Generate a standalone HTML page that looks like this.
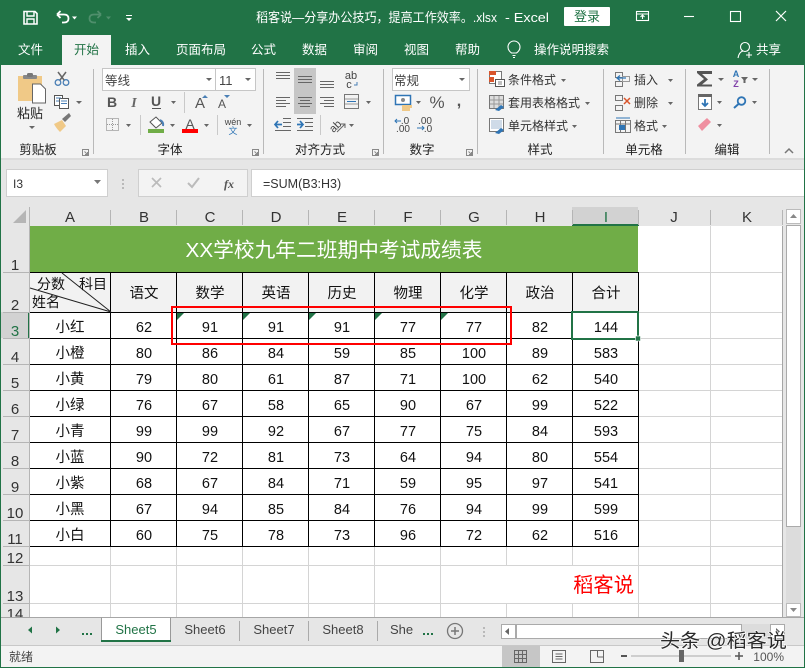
<!DOCTYPE html>
<html lang="zh"><head><meta charset="utf-8"><style>
html,body{margin:0;padding:0;width:805px;height:668px;overflow:hidden;background:#fff}
svg{display:block}
text{font-family:"Liberation Sans","WenQuanYi Zen Hei","Noto Sans CJK SC",sans-serif;fill:#222}
.c{text-anchor:middle}
.cell{font-size:14.5px;text-anchor:middle;fill:#111}
.hd{font-size:15px;text-anchor:middle;fill:#333}
.rb{font-size:12px;fill:#333}
.t{font-size:12.5px;fill:#fff}
</style></head><body>
<svg width="805" height="668" viewBox="0 0 805 668" xmlns="http://www.w3.org/2000/svg">
<rect width="805" height="668" fill="#fff"/>
<!-- title -->
<rect width="805" height="65" fill="#217346"/>
<g fill="none" stroke="#fff" stroke-width="1.6">
<path d="M24 11.500h11l2 2v10.500h-13z"/><path d="M27 12v4h7v-4M27 24v-5h7v5" stroke-width="1.400"/>
<path d="M57 14.500h7q4.500 0 4.500 4t-4.500 4h-2M57 14.500l3.500-3.500M57 14.500l3.500 3.500" stroke-width="1.800"/>
</g>
<path d="M72 16.500h5l-2.500 3z" fill="#fff"/>
<path d="M101 14.500h-7q-4.500 0-4.500 4t4.500 4h2M101 14.500l-3.500-3.500M101 14.500l-3.500 3.500" fill="none" stroke="#4f8f6c" stroke-width="1.800"/>
<path d="M106 16.500h5l-2.500 3z" fill="#4f8f6c"/>
<path d="M126 15h6v1h-6zM126 18h6l-3 3z" fill="#fff"/>
<text x="256" y="22" font-size="13" style="fill:#fff" textLength="241" lengthAdjust="spacingAndGlyphs">稻客说—分享办公技巧，提高工作效率。.xlsx</text>
<text x="505" y="22" font-size="13" style="fill:#fff" textLength="44" lengthAdjust="spacingAndGlyphs">-  Excel</text>
<rect x="564" y="7" width="46" height="19" rx="1" fill="#fff"/>
<text x="587" y="21" class="c" font-size="13" style="fill:#217346">登录</text>
<g fill="none" stroke="#fff" stroke-width="1.100">
<rect x="636.500" y="11.500" width="12" height="9"/><path d="M636.500 14h12M642.500 19v-4M640.500 17l2-2 2 2"/>
<path d="M684 16.500h10"/><rect x="730.500" y="11.500" width="10" height="10"/>
<path d="M776 11l10 10M786 11l-10 10" stroke-width="1.200"/>
</g>
<!-- tabs -->
<rect x="62" y="35" width="49" height="31" fill="#f3f3f3"/>
<text x="18" y="54" class="t">文件</text>
<text x="74" y="54" class="t" style="fill:#217346">开始</text>
<text x="125" y="54" class="t">插入</text>
<text x="176" y="54" class="t">页面布局</text>
<text x="251" y="54" class="t">公式</text>
<text x="302" y="54" class="t">数据</text>
<text x="353" y="54" class="t">审阅</text>
<text x="404" y="54" class="t">视图</text>
<text x="455" y="54" class="t">帮助</text>
<text x="534" y="54" class="t">操作说明搜索</text>
<text x="756" y="54" class="t">共享</text>
<g fill="none" stroke="#fff" stroke-width="1.100">
<path d="M511.500 53q-3.500-2.500-3.500-6a6 6 0 0 1 12 0q0 3.500-3.500 6zM512.500 55.500h3M513 57.500h2"/>
<circle cx="745" cy="47" r="4.500"/><path d="M738 58q1-6 5-7M746 55h6M749 52v6"/>
</g>
<!-- ribbon -->
<rect x="1" y="65" width="804" height="93" fill="#f3f3f3"/>
<rect x="1" y="158" width="804" height="2" fill="#dcdcdc"/>
<rect x="1" y="160" width="804" height="47" fill="#e6e6e6"/>
<g fill="#b9b9b9">
<rect x="93" y="69" width="1" height="85"/><rect x="263" y="69" width="1" height="85"/><rect x="383" y="69" width="1" height="85"/><rect x="477" y="69" width="1" height="85"/><rect x="603" y="69" width="1" height="85"/><rect x="685" y="69" width="1" height="85"/><rect x="769" y="69" width="1" height="85"/>
</g>
<!-- clipboard -->
<path d="M18 76h24v25H18z" fill="#f0c987"/>
<rect x="23" y="75" width="14" height="4" rx="1" fill="#888"/><rect x="27" y="73" width="6" height="4" rx="1.500" fill="#777"/>
<path d="M32.500 84h8l5 5v14h-13z" fill="#fff" stroke="#666"/>
<text x="30" y="118" class="c" font-size="13" style="fill:#222">粘贴</text>
<path d="M29 126h6l-3 3z" fill="#666"/>
<g fill="none" stroke="#4a7fb5" stroke-width="1.300"><circle cx="58" cy="82.500" r="2.800"/><circle cx="66" cy="82.500" r="2.800"/></g>
<path d="M58 72l6 8M66 72l-6 8" stroke="#666" stroke-width="1.500"/>
<g fill="#fff" stroke="#555"><rect x="54.500" y="95.500" width="8" height="10"/><rect x="59.500" y="98.500" width="9" height="10"/></g>
<path d="M56 98h5M56 101h3M61 101h6M61 103.500h6" stroke="#4a7fb5"/>
<path d="M76 101h6l-3 3z" fill="#666"/>
<path d="M54 124l8-4 4 6-6 6q-4-4-6-8z" fill="#f0c987"/><path d="M62 119l7-6 2 3-6 6z" fill="#777"/>
<text x="38" y="154" class="c" font-size="12.500">剪贴板</text>
<g fill="none" stroke="#888"><path d="M82.500 149.500h6v6h-6zM84.500 151.500l3 3M87.500 152v2.500h-2.500"/><path d="M252.500 149.500h6v6h-6zM254.500 151.500l3 3M257.500 152v2.500h-2.500"/><path d="M372.500 149.500h6v6h-6zM374.500 151.500l3 3M377.500 152v2.500h-2.500"/><path d="M466.500 149.500h6v6h-6zM468.500 151.500l3 3M471.500 152v2.500h-2.500"/></g>
<!-- font -->
<rect x="102.500" y="68.500" width="153" height="22" fill="#fff" stroke="#c6c6c6"/><rect x="215" y="68" width="1" height="23" fill="#c6c6c6"/>
<text x="105" y="85" font-size="12.500" style="fill:#444">等线</text>
<text x="219" y="85" font-size="13" style="fill:#444">11</text>
<path d="M206 78h6l-3 3zM245 78h6l-3 3z" fill="#666"/>
<text x="112" y="107" class="c" font-size="14" font-weight="700" style="fill:#555">B</text>
<text x="134" y="107" class="c" font-size="14" font-style="italic" style="fill:#666;font-family:'Liberation Serif'" font-weight="700">I</text>
<text x="156" y="106" class="c" font-size="14" font-weight="700" style="fill:#555">U</text>
<path d="M152 108.500h9" stroke="#555"/>
<path d="M171 101h5l-2.500 3z" fill="#666"/><rect x="184" y="92" width="1" height="21" fill="#c9c9c9"/>
<text x="200" y="108" class="c" font-size="15" style="fill:#555">A</text><text x="222" y="108" class="c" font-size="12" style="fill:#555">A</text>
<path d="M202 98l3-3 3 3zM224 95l3 3 3-3z" fill="#4a7fb5"/>
<rect x="106.500" y="118.500" width="12" height="12" fill="none" stroke="#777" stroke-dasharray="1 1"/><path d="M112.500 119v11M107 124.500h11" stroke="#999" stroke-dasharray="1 1"/>
<path d="M126 124h5l-2.500 3z" fill="#666"/><rect x="140" y="115" width="1" height="20" fill="#c9c9c9"/>
<path d="M150 122l6-5 6 6-6 5z" fill="#fff" stroke="#555"/><path d="M160 120q4 2 3 6" stroke="#4a7fb5" stroke-width="2" fill="none"/>
<rect x="148" y="129" width="16" height="4" fill="#70ad47"/>
<path d="M170 124h5l-2.500 3z" fill="#666"/>
<text x="190" y="129" class="c" font-size="14" style="fill:#555">A</text><rect x="182" y="129" width="16" height="4" fill="#f00"/>
<path d="M204 124h5l-2.500 3z" fill="#666"/><rect x="217" y="115" width="1" height="20" fill="#c9c9c9"/>
<text x="233" y="125" class="c" font-size="9" style="fill:#444">wén</text><text x="233" y="134" class="c" font-size="9" style="fill:#2f75b5">文</text>
<path d="M247 124h5l-2.500 3z" fill="#666"/>
<text x="170" y="154" class="c" font-size="12.500">字体</text>
<!-- align -->
<rect x="294" y="68" width="22" height="46" fill="#c6c6c6"/>
<g stroke="#666">
<path d="M276 72.500h14M276 75.500h14M276 78.500h14M298 76.500h14M298 79.500h14M298 82.500h14M320 81.500h14M320 84.500h14M320 87.500h14"/>
<path d="M276 97.500h14M276 100.500h10M276 103.500h14M276 106.500h10M298 97.500h14M300 100.500h10M298 103.500h14M300 106.500h10M320 97.500h14M324 100.500h10M320 103.500h14M324 106.500h10"/>
<path d="M283 118.500h8M283 122.500h8M283 126.500h8M275 130.500h16M297 118.500h16M305 122.500h8M305 126.500h8M297 130.500h16"/>
</g>
<path d="M275 124.500h7M278 121l-3 3.500 3 3.500" stroke="#2f75b5" stroke-width="1.700" fill="none"/>
<path d="M297 124.500h6M300 121l3 3.500-3 3.500" stroke="#2f75b5" stroke-width="1.700" fill="none"/>
<text x="351" y="79" class="c" font-size="11" style="fill:#444">ab</text><text x="349" y="88" class="c" font-size="11" style="fill:#444">c</text><path d="M357 82v3h-3" stroke="#4a7fb5" fill="none"/>
<rect x="344.500" y="94.500" width="14" height="14" fill="none" stroke="#777"/><path d="M345 99h13M345 104h13" stroke="#999"/><path d="M347 101.500h9" stroke="#2f75b5"/>
<path d="M366 101h5l-2.500 3z" fill="#666"/>
<rect x="320" y="115" width="1" height="20" fill="#c9c9c9"/>
<text x="335" y="130" class="c" font-size="11" style="fill:#444" transform="rotate(-45 335 126)">ab</text><path d="M337 132l8-8M341 124h4v4" stroke="#666" fill="none"/>
<path d="M349 124h5l-2.500 3z" fill="#666"/>
<text x="320" y="154" class="c" font-size="12.500">对齐方式</text>
<!-- number -->
<rect x="392.500" y="68.500" width="77" height="22" fill="#fff" stroke="#c6c6c6"/>
<text x="394" y="85" font-size="12.500" style="fill:#444">常规</text><path d="M459 78h6l-3 3z" fill="#666"/>
<rect x="395.500" y="95.500" width="15" height="9" fill="#fff" stroke="#2f75b5" stroke-width="1.500"/><circle cx="403" cy="100" r="2" fill="#888"/>
<path d="M402 105h10v3h-10zM402 108h8v3h-8z" fill="#f0c987"/>
<path d="M416 101h5l-2.500 3z" fill="#666"/>
<text x="437" y="108" class="c" font-size="17" style="fill:#555">%</text><text x="459" y="106" class="c" font-size="16" font-weight="700" style="fill:#555">,</text>
<text x="405" y="124" class="c" font-size="10" style="fill:#444">.0</text><text x="403" y="132" class="c" font-size="10" style="fill:#444">.00</text><path d="M395 121h6M397 119l-2 2 2 2" stroke="#2f75b5" fill="none"/>
<text x="425" y="124" class="c" font-size="10" style="fill:#444">.00</text><text x="428" y="132" class="c" font-size="10" style="fill:#444">.0</text><path d="M417 128h7M422 126l2 2-2 2" stroke="#2f75b5" fill="none"/>
<text x="422" y="154" class="c" font-size="12.500">数字</text>
<!-- styles -->
<rect x="489.500" y="71.500" width="12" height="12" fill="#fff" stroke="#777"/><path d="M489 71h7v4h-7zM489 77h5v5h-5z" fill="#d9552c"/><rect x="495.500" y="79.500" width="9" height="7" fill="#fff" stroke="#555"/><path d="M498 82h4M498 84h4" stroke="#555" stroke-width=".7"/>
<text x="508" y="84" class="rb">条件格式</text><path d="M561 79h5l-2.500 3z" fill="#666"/>
<rect x="489.500" y="95.500" width="14" height="13" fill="#ddd" stroke="#777"/><path d="M494 96v12M499 96v12M490 100h13M490 104h13" stroke="#999"/><path d="M495 110l6-5 3 2-5 4z" fill="#2f75b5"/>
<text x="508" y="107" class="rb">套用表格格式</text><path d="M585 102h5l-2.500 3z" fill="#666"/>
<rect x="489.500" y="118.500" width="14" height="13" fill="#fff" stroke="#777"/><rect x="491" y="120" width="11" height="9" fill="#cfdbe8"/><path d="M495 133l6-5 3 2-5 4z" fill="#2f75b5"/>
<text x="508" y="130" class="rb">单元格样式</text><path d="M572 125h5l-2.500 3z" fill="#666"/>
<text x="540" y="154" class="c" font-size="12.500">样式</text>
<!-- cells -->
<g fill="none" stroke="#777"><rect x="615.500" y="72.500" width="7" height="5"/><rect x="615.500" y="81.500" width="7" height="5"/><rect x="622.500" y="76.500" width="7" height="5" stroke="#999"/>
<rect x="615.500" y="95.500" width="7" height="5"/><rect x="615.500" y="105.500" width="7" height="5"/>
<rect x="615.500" y="120.500" width="15" height="12"/><path d="M616 124h14M620.500 121v11M625.500 121v11"/></g>
<path d="M617 78h9M620 75.500l-3 2.500 3 2.500" stroke="#2f75b5" fill="none" stroke-width="1.300"/>
<path d="M624 98l6 6M630 98l-6 6" stroke="#d9552c" stroke-width="1.500"/>
<rect x="619" y="125" width="6" height="5" fill="#2f75b5"/><path d="M616 118h14" stroke="#2f75b5"/>
<text x="634" y="84" class="rb">插入</text><path d="M668 79h5l-2.500 3z" fill="#666"/>
<text x="634" y="107" class="rb">删除</text><path d="M668 102h5l-2.500 3z" fill="#666"/>
<text x="634" y="130" class="rb">格式</text><path d="M662 125h5l-2.500 3z" fill="#666"/>
<text x="644" y="154" class="c" font-size="12.500">单元格</text>
<!-- edit -->
<path d="M697 71h15v3h-10l6 5.500-6 5h10v2h-15v-2l7-5.500-7-6z" fill="#555"/>
<path d="M718 78h6l-3 3z" fill="#666"/>
<text x="736" y="77" class="c" font-size="9" font-weight="700" style="fill:#2f75b5">A</text><text x="736" y="87" class="c" font-size="9" font-weight="700" style="fill:#7f3fa8">Z</text>
<path d="M741 77h7l-2.500 3v3h-2v-3z" fill="#666"/><path d="M752 78h6l-3 3z" fill="#666"/>
<rect x="698.500" y="94.500" width="13" height="15" fill="#fff" stroke="#777"/><rect x="698" y="94" width="14" height="3" fill="#666"/>
<path d="M705 99v7M702 103l3 3 3-3" stroke="#2f75b5" stroke-width="1.800" fill="none"/><path d="M717 101h5l-2.500 3z" fill="#666"/>
<circle cx="741.500" cy="101" r="3.800" fill="none" stroke="#2f75b5" stroke-width="1.800"/><path d="M738.500 104l-4.500 4" stroke="#2f75b5" stroke-width="2"/><path d="M752 101h5l-2.500 3z" fill="#666"/>
<path d="M698 126l9-8 4 4-9 9z" fill="#ef8fa0"/><path d="M717 124h5l-2.500 3z" fill="#666"/>
<text x="727" y="154" class="c" font-size="12.500">编辑</text>
<path d="M785 153l4-4 4 4" fill="none" stroke="#777" stroke-width="1.500"/>
<!-- formula bar -->
<rect x="6.500" y="169.500" width="101" height="27" fill="#fff" stroke="#cfcfcf"/>
<text x="13" y="188" font-size="12" style="fill:#333">I3</text>
<path d="M94 180h7l-3.500 4z" fill="#777"/>
<path d="M123 179v2M123 183v2M123 187v2" stroke="#aaa" stroke-width="1.500"/>
<rect x="138.500" y="169.500" width="109" height="27" fill="#f3f3f3" stroke="#cfcfcf"/>
<path d="M152 178l9 9M161 178l-9 9" stroke="#bbb" stroke-width="1.700"/>
<path d="M188 183l4 4 7-9" stroke="#bbb" stroke-width="2" fill="none"/>
<text x="229" y="188" class="c" font-size="12" font-style="italic" font-weight="700" style="fill:#555;font-family:'Liberation Serif'">fx</text>
<rect x="251.500" y="169.500" width="560" height="27" fill="#fff" stroke="#cfcfcf"/>
<text x="263" y="188" font-size="12.500" style="fill:#333">=SUM(B3:H3)</text>
<!-- headers -->
<rect x="1" y="207" width="785" height="19" fill="#e6e6e6"/>
<rect x="1" y="207" width="28" height="410" fill="#e6e6e6"/>
<path d="M26 210v13h-13z" fill="#b5b5b5"/>
<rect x="572" y="207" width="66" height="17" fill="#d2d2d2"/><rect x="572" y="224" width="67" height="2" fill="#217346"/>
<rect x="1" y="312" width="28" height="26" fill="#d2d2d2"/><rect x="28" y="312" width="2" height="26" fill="#217346"/>
<g fill="#b5b5b5"><rect x="110" y="210" width="1" height="15"/><rect x="176" y="210" width="1" height="15"/><rect x="242" y="210" width="1" height="15"/><rect x="308" y="210" width="1" height="15"/><rect x="374" y="210" width="1" height="15"/><rect x="440" y="210" width="1" height="15"/><rect x="506" y="210" width="1" height="15"/><rect x="572" y="210" width="1" height="15"/><rect x="638" y="210" width="1" height="15"/><rect x="710" y="210" width="1" height="15"/><rect x="782" y="210" width="1" height="15"/><rect x="29" y="207" width="1" height="19"/>
<rect x="3" y="272" width="26" height="1"/><rect x="3" y="312" width="26" height="1"/><rect x="3" y="338" width="26" height="1"/><rect x="3" y="364" width="26" height="1"/><rect x="3" y="390" width="26" height="1"/><rect x="3" y="416" width="26" height="1"/><rect x="3" y="442" width="26" height="1"/><rect x="3" y="468" width="26" height="1"/><rect x="3" y="494" width="26" height="1"/><rect x="3" y="520" width="26" height="1"/><rect x="3" y="546" width="26" height="1"/><rect x="3" y="565" width="26" height="1"/><rect x="3" y="603" width="26" height="1"/><rect x="29" y="226" width="1" height="391"/></g>
<text x="70" y="222" class="hd">A</text><text x="144" y="222" class="hd">B</text><text x="210" y="222" class="hd">C</text><text x="276" y="222" class="hd">D</text><text x="342" y="222" class="hd">E</text><text x="408" y="222" class="hd">F</text><text x="474" y="222" class="hd">G</text><text x="540" y="222" class="hd">H</text><text x="606" y="222" class="hd" style="fill:#217346">I</text><text x="674" y="222" class="hd">J</text><text x="747" y="222" class="hd">K</text>
<text x="15" y="270" class="hd">1</text><text x="15" y="310" class="hd">2</text><text x="15" y="336" class="hd" style="fill:#217346">3</text><text x="15" y="362" class="hd">4</text><text x="15" y="388" class="hd">5</text><text x="15" y="414" class="hd">6</text><text x="15" y="440" class="hd">7</text><text x="15" y="466" class="hd">8</text><text x="15" y="492" class="hd">9</text><text x="15" y="518" class="hd">10</text><text x="15" y="544" class="hd">11</text><text x="15" y="563" class="hd">12</text><text x="15" y="601" class="hd">13</text><text x="15" y="619" class="hd">14</text>
<!-- light grid -->
<g stroke="#d4d4d4" fill="none">
<path d="M110.500 546v71M176.500 546v71M242.500 546v71M308.500 546v71M374.500 546v71M440.500 546v71M506.500 546v19M506.500 603v14M572.500 546v19M572.500 603v14M638.500 546v71M710.500 226v391M30 565.500h752M30 603.500h752M638 272.500h144M638 312.500h144M638 338.500h144M638 364.500h144M638 390.500h144M638 416.500h144M638 442.500h144M638 468.500h144M638 494.500h144M638 520.500h144M638 546.500h144"/>
</g>
<rect x="782" y="226" width="1" height="391" fill="#a6a6a6"/>
<!-- sheet -->
<rect x="30" y="226" width="608" height="46" fill="#70ad47"/>
<text x="334" y="257" class="c" font-size="20.500" style="fill:#fff" textLength="297" lengthAdjust="spacingAndGlyphs">XX学校九年二班期中考试成绩表</text>
<rect x="30" y="272" width="608" height="40" fill="#f2f2f2"/>
<g stroke="#000" fill="none">
<path d="M30 272.500h609M30 312.500h609M30 338.500h609M30 364.500h609M30 390.500h609M30 416.500h609M30 442.500h609M30 468.500h609M30 494.500h609M30 520.500h609M30 546.500h609"/>
<path d="M110.500 272v275M176.500 272v275M242.500 272v275M308.500 272v275M374.500 272v275M440.500 272v275M506.500 272v275M572.500 272v275M638.500 272v275"/>
</g>
<path d="M62 273l49 39M30 288l81 24" stroke="#222" fill="none"/>
<text x="37" y="289" font-size="14" style="fill:#111">分数</text><text x="79" y="289" font-size="14" style="fill:#111">科目</text><text x="32" y="307" font-size="14" style="fill:#111">姓名</text>
<text x="144" y="298" class="cell">语文</text><text x="210" y="298" class="cell">数学</text><text x="276" y="298" class="cell">英语</text><text x="342" y="298" class="cell">历史</text><text x="408" y="298" class="cell">物理</text><text x="474" y="298" class="cell">化学</text><text x="540" y="298" class="cell">政治</text><text x="606" y="298" class="cell">合计</text>
<path d="M177 313h7l-7 7zM243 313h7l-7 7zM309 313h7l-7 7zM375 313h7l-7 7zM441 313h7l-7 7z" fill="#217346"/>
<g transform="translate(0,1)">
<text x="70" y="331" class="cell">小红</text><text x="144" y="331" class="cell">62</text><text x="210" y="331" class="cell">91</text><text x="276" y="331" class="cell">91</text><text x="342" y="331" class="cell">91</text><text x="408" y="331" class="cell">77</text><text x="474" y="331" class="cell">77</text><text x="540" y="331" class="cell">82</text><text x="606" y="331" class="cell">144</text>
<text x="70" y="357" class="cell">小橙</text><text x="144" y="357" class="cell">80</text><text x="210" y="357" class="cell">86</text><text x="276" y="357" class="cell">84</text><text x="342" y="357" class="cell">59</text><text x="408" y="357" class="cell">85</text><text x="474" y="357" class="cell">100</text><text x="540" y="357" class="cell">89</text><text x="606" y="357" class="cell">583</text>
<text x="70" y="383" class="cell">小黄</text><text x="144" y="383" class="cell">79</text><text x="210" y="383" class="cell">80</text><text x="276" y="383" class="cell">61</text><text x="342" y="383" class="cell">87</text><text x="408" y="383" class="cell">71</text><text x="474" y="383" class="cell">100</text><text x="540" y="383" class="cell">62</text><text x="606" y="383" class="cell">540</text>
<text x="70" y="409" class="cell">小绿</text><text x="144" y="409" class="cell">76</text><text x="210" y="409" class="cell">67</text><text x="276" y="409" class="cell">58</text><text x="342" y="409" class="cell">65</text><text x="408" y="409" class="cell">90</text><text x="474" y="409" class="cell">67</text><text x="540" y="409" class="cell">99</text><text x="606" y="409" class="cell">522</text>
<text x="70" y="435" class="cell">小青</text><text x="144" y="435" class="cell">99</text><text x="210" y="435" class="cell">99</text><text x="276" y="435" class="cell">92</text><text x="342" y="435" class="cell">67</text><text x="408" y="435" class="cell">77</text><text x="474" y="435" class="cell">75</text><text x="540" y="435" class="cell">84</text><text x="606" y="435" class="cell">593</text>
<text x="70" y="461" class="cell">小蓝</text><text x="144" y="461" class="cell">90</text><text x="210" y="461" class="cell">72</text><text x="276" y="461" class="cell">81</text><text x="342" y="461" class="cell">73</text><text x="408" y="461" class="cell">64</text><text x="474" y="461" class="cell">94</text><text x="540" y="461" class="cell">80</text><text x="606" y="461" class="cell">554</text>
<text x="70" y="487" class="cell">小紫</text><text x="144" y="487" class="cell">68</text><text x="210" y="487" class="cell">67</text><text x="276" y="487" class="cell">84</text><text x="342" y="487" class="cell">71</text><text x="408" y="487" class="cell">59</text><text x="474" y="487" class="cell">95</text><text x="540" y="487" class="cell">97</text><text x="606" y="487" class="cell">541</text>
<text x="70" y="513" class="cell">小黑</text><text x="144" y="513" class="cell">67</text><text x="210" y="513" class="cell">94</text><text x="276" y="513" class="cell">85</text><text x="342" y="513" class="cell">84</text><text x="408" y="513" class="cell">76</text><text x="474" y="513" class="cell">94</text><text x="540" y="513" class="cell">99</text><text x="606" y="513" class="cell">599</text>
<text x="70" y="539" class="cell">小白</text><text x="144" y="539" class="cell">60</text><text x="210" y="539" class="cell">75</text><text x="276" y="539" class="cell">78</text><text x="342" y="539" class="cell">73</text><text x="408" y="539" class="cell">96</text><text x="474" y="539" class="cell">72</text><text x="540" y="539" class="cell">62</text><text x="606" y="539" class="cell">516</text>
</g>
<text x="634" y="592" font-size="20.300" style="fill:#f00;text-anchor:end">稻客说</text>
<rect x="172" y="307" width="339" height="37" fill="none" stroke="#f00" stroke-width="2"/>
<rect x="572" y="312" width="66" height="27" fill="none" stroke="#217346" stroke-width="2"/>
<rect x="635.500" y="336" width="5" height="5" fill="#217346" stroke="#fff" stroke-width=".6"/>
<!-- v scrollbar -->
<rect x="783" y="207" width="22" height="410" fill="#e6e6e6"/>
<rect x="786.500" y="209.500" width="14" height="14" fill="#fff" stroke="#bbb"/>
<rect x="786.500" y="225.500" width="14" height="301" fill="#fff" stroke="#aaa"/>
<rect x="786" y="527" width="15" height="76" fill="#dcdcdc"/>
<rect x="786.500" y="603.500" width="14" height="13" fill="#fff" stroke="#bbb"/>
<path d="M790 218l3.500-4 3.500 4z" fill="#888"/><path d="M790 608h7l-3.500 4z" fill="#888"/>
<!-- tab bar -->
<rect x="1" y="617" width="804" height="28" fill="#e6e6e6"/>
<rect x="1" y="617" width="804" height="1" fill="#a6a6a6"/>
<rect x="1" y="645" width="804" height="1" fill="#c8c8c8"/>
<rect x="1" y="646" width="804" height="21" fill="#f3f3f3"/>
<path d="M28 630l4-3.500v7zM60 630l-4-3.500v7z" fill="#217346"/>
<path d="M82 633h2v2h-2zM86 633h2v2h-2zM90 633h2v2h-2z" fill="#217346"/>
<path d="M101.500 642v-24.500M170.500 642v-24.500" stroke="#999" fill="none"/>
<rect x="102" y="618" width="68" height="22" fill="#fff"/>
<rect x="101" y="640" width="70" height="2" fill="#217346"/>
<text x="136" y="634" class="c" font-size="13" style="fill:#217346">Sheet5</text>
<text x="205" y="634" class="c" font-size="13" style="fill:#444">Sheet6</text>
<text x="274" y="634" class="c" font-size="13" style="fill:#444">Sheet7</text>
<text x="343" y="634" class="c" font-size="13" style="fill:#444">Sheet8</text>
<text x="390" y="634" font-size="13" style="fill:#444">She</text>
<path d="M239.500 621v20M308.500 621v20M377.500 621v20" stroke="#aaa"/>
<path d="M423 633h2v2h-2zM427 633h2v2h-2zM431 633h2v2h-2z" fill="#217346"/>
<circle cx="455" cy="631" r="7.500" fill="none" stroke="#777" stroke-width="1.300"/><path d="M451 631h8M455 627v8" stroke="#777" stroke-width="1.500"/>
<path d="M484 627v2M484 631v2M484 635v2" stroke="#aaa" stroke-width="1.500"/>
<rect x="501.500" y="624.500" width="14" height="14" fill="#fff" stroke="#aaa"/><path d="M505 631.500l4-3.500v7z" fill="#666"/>
<rect x="516.500" y="624.500" width="225" height="14" fill="#fff" stroke="#aaa"/>
<rect x="742" y="624" width="28" height="15" fill="#dcdcdc"/>
<rect x="770.500" y="624.500" width="14" height="14" fill="#fff" stroke="#aaa"/><path d="M780 631.500l-4-3.500v7z" fill="#666"/>
<!-- status -->
<text x="9" y="661" font-size="12" style="fill:#444">就绪</text>
<rect x="502" y="646" width="38" height="21" fill="#c6c6c6"/>
<g fill="none" stroke="#666"><rect x="514.500" y="650.500" width="12" height="12"/><path d="M518.500 651v11M522.500 651v11M515 654.500h11M515 658.500h11"/>
<rect x="552.500" y="650.500" width="13" height="12"/><path d="M555.500 654h7M555.500 656.500h7M555.500 659h7"/>
<path d="M590.500 650.500h13v12h-13zM597.500 651v6M597.500 657h6"/></g>
<path d="M621 656h6" stroke="#555" stroke-width="2"/>
<path d="M631 656h100" stroke="#aaa"/><rect x="679" y="650" width="5" height="12" fill="#666"/>
<path d="M735 656h8M739 652v8" stroke="#555" stroke-width="1.500"/>
<text x="784" y="661" font-size="12" style="fill:#555;text-anchor:end">100%</text>
<!-- watermark -->
<text x="660" y="647" font-size="19" style="fill:#2a2a2a;stroke:#fff;stroke-width:1.200;paint-order:stroke" textLength="127" lengthAdjust="spacingAndGlyphs">头条 @稻客说</text>
<!-- window border -->
<rect x="0" y="65" width="1" height="603" fill="#217346"/>
<rect x="804" y="65" width="1" height="603" fill="#217346"/>
<rect x="0" y="667" width="805" height="1" fill="#217346"/>
</svg>
</body></html>
